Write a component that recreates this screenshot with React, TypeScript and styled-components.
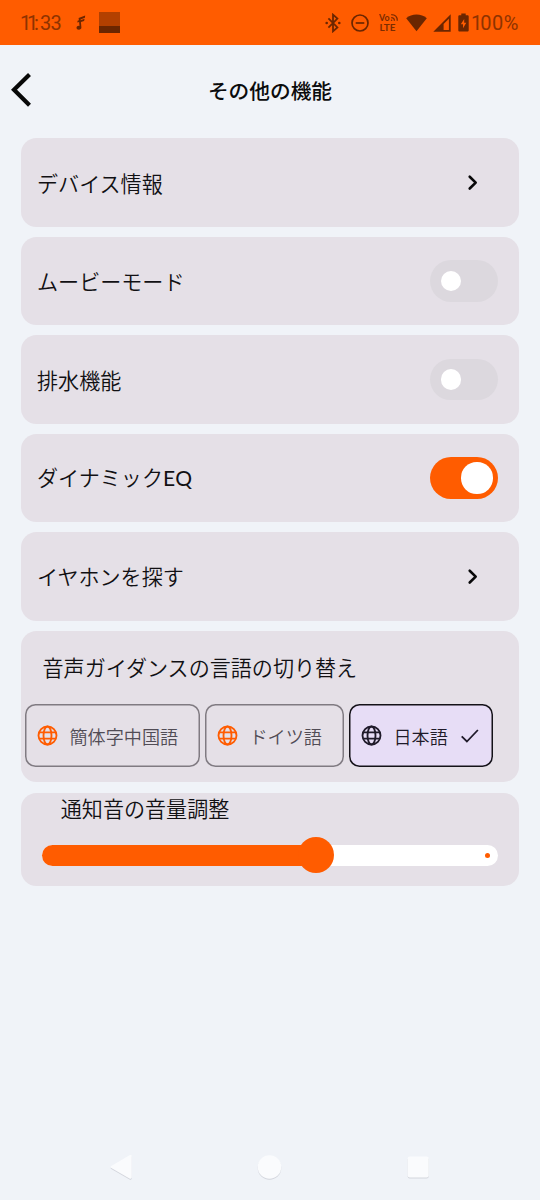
import React from "react";
import styled, { createGlobalStyle } from "styled-components";

const ORANGE = "#ff5c00";
const DARK = "#6b2600";

const GlobalStyle = createGlobalStyle`
  * { box-sizing: border-box; }
  body {
    margin: 0;
    background: #f0f3f8;
    font-family: "Noto Sans CJK JP", "Noto Sans", sans-serif;
    color: #111013;
  }
`;

const Screen = styled.div`
  width: 540px;
  height: 1200px;
  display: flex;
  flex-direction: column;
  overflow: hidden;
`;

const StatusBar = styled.div`
  height: 44.7px;
  flex: none;
  display: flex;
  align-items: center;
  justify-content: space-between;
  padding: 1px 18px 0 20px;
  background: ${ORANGE};
`;

const StatusGroup = styled.div`
  display: flex;
  align-items: center;
  height: 100%;
`;

const StatusText = styled.span`
  font: 400 20px/24px Roboto, sans-serif;
  color: #8e3300;
  white-space: nowrap;
`;

const Clock = styled(StatusText)`
  width: 55.5px;
`;

const Percent = styled(StatusText)`
  width: 51px;
`;

const Tracked = styled.span<{ $spacing: number }>`
  letter-spacing: ${(p) => p.$spacing}px;
`;

const Thumbnail = styled.div`
  width: 21.3px;
  height: 21px;
  margin-left: 13.5px;
  background: linear-gradient(#b34000 0 14px, #6b2600 14px);
`;

const Header = styled.header`
  position: relative;
  flex: none;
  height: 93.8px;
  display: flex;
  align-items: center;
  justify-content: center;
`;

const BackButton = styled.button`
  position: absolute;
  left: 9.5px;
  top: 27px;
  width: 24px;
  height: 36px;
  padding: 0;
  border: 0;
  background: none;
`;

const Title = styled.h1`
  margin: 0;
  padding-bottom: 4px;
  font-size: 20.7px;
  line-height: 30px;
  font-weight: 500;
  color: #0b0b0c;
`;

const List = styled.main`
  flex: 1;
  display: flex;
  flex-direction: column;
  gap: 10.15px;
  padding: 0 21px;
`;

const Card = styled.section<{ $height: number }>`
  height: ${(p) => p.$height}px;
  flex: none;
  border-radius: 15.5px;
  background: #e5e0e7;
`;

const Row = styled(Card)`
  display: flex;
  align-items: center;
  justify-content: space-between;
  padding: 0 20.7px 0 16px;
`;

const Label = styled.span`
  font-size: 21.07px;
  line-height: 30px;
  font-weight: 350;
  white-space: nowrap;
`;

const Chevron = styled.svg`
  width: 11px;
  height: 17px;
  margin-right: 20.6px;
`;

const Toggle = styled.span<{ $on: boolean }>`
  width: 68px;
  height: 41.6px;
  border-radius: 21px;
  display: flex;
  align-items: center;
  justify-content: ${(p) => (p.$on ? "flex-end" : "flex-start")};
  padding: 0 ${(p) => (p.$on ? 5.5 : 10.3)}px;
  background: ${(p) => (p.$on ? ORANGE : "#dcd8de")};
`;

const Knob = styled.span<{ $on: boolean }>`
  flex: none;
  width: ${(p) => (p.$on ? 31.4 : 20.8)}px;
  height: ${(p) => (p.$on ? 31.4 : 20.8)}px;
  border-radius: 50%;
  background: #fff;
`;

const SectionLabel = styled(Label)`
  display: block;
  padding: 21px 0 0 21.5px;
`;

const Chips = styled.div`
  display: flex;
  gap: 5px;
  padding: 22.7px 0 0 4px;
`;

const Chip = styled.button<{ $width: number; $selected?: boolean }>`
  width: ${(p) => p.$width}px;
  height: 62.7px;
  display: flex;
  align-items: center;
  padding: 0 0 0 11.5px;
  border: 0;
  box-shadow: inset 0 0 0 1.5px ${(p) => (p.$selected ? "#141218" : "#807b82")};
  border-radius: 10.5px;
  background: ${(p) => (p.$selected ? "#e7ddf6" : "transparent")};
  color: ${(p) => (p.$selected ? "#1f1a29" : "#514c55")};
  font: 350 18.1px/26px "Noto Sans CJK JP", sans-serif;
  white-space: nowrap;
`;

const ChipText = styled.span`
  margin: 0 12px;
`;

const VolumeLabel = styled(Label)`
  display: block;
  padding: 0 0 0 39.8px;
`;

const SliderTrack = styled.div`
  position: relative;
  width: 456px;
  height: 21px;
  margin: 22.3px 0 0 21px;
  border-radius: 10.5px;
  background: #fff;
`;

const SliderFill = styled.div`
  width: 274px;
  height: 100%;
  border-radius: 10.5px 0 0 10.5px;
  background: ${ORANGE};
`;

const SliderThumb = styled.div`
  position: absolute;
  left: 255.7px;
  top: -8.2px;
  width: 36.4px;
  height: 36.4px;
  border-radius: 50%;
  background: ${ORANGE};
`;

const SliderStop = styled.div`
  position: absolute;
  right: 7.8px;
  top: 7.9px;
  width: 5.2px;
  height: 5.2px;
  border-radius: 50%;
  background: ${ORANGE};
`;

const NavBar = styled.nav`
  height: 66px;
  flex: none;
  display: flex;
  justify-content: space-between;
  align-items: center;
  padding: 0 108.7px 0 108.5px;
`;

const NavIcon = styled.svg`
  filter: drop-shadow(0 1px 0.6px rgba(60, 60, 80, 0.16));
`;

const MusicIcon = () => (
  <svg width="10" height="16" viewBox="0 0 10 16" fill={DARK}>
    <path d="M2.6 3.1 9.2.4 8.9 2.7 4.6 4.4v.8l4-1.5-.5 2.4-3.2 1 .5 5.4c0 1.3-1.1 2.2-2.5 2.2S.5 14 .5 12.8s1-2 2.4-2l.6.1-.4-4-1.8.6.3-1.8 1.3-.5z" />
  </svg>
);

const BluetoothIcon = () => (
  <svg width="16" height="20" viewBox="0 0 16 20" fill="none" stroke={DARK} strokeWidth="1.8">
    <path d="m3.4 5.3 9 9.1L8 18.3V1.7l4.4 3.9-9 9.1" />
    <circle cx="1.7" cy="10" r="1.3" fill={DARK} stroke="none" />
    <circle cx="14.3" cy="10" r="1.3" fill={DARK} stroke="none" />
  </svg>
);

const DndIcon = () => (
  <svg width="18" height="18" viewBox="0 0 18 18" fill="none" stroke={DARK} strokeWidth="1.7">
    <circle cx="9" cy="9" r="8" />
    <path d="M4.7 9h8.6" />
  </svg>
);

const VoIcon = () => (
  <svg width="20" height="19" viewBox="0 0 20 19">
    <g fill="#7b2c00" fontFamily="Lato, sans-serif" fontWeight="700">
      <text x="0" y="7.6" fontSize="9.6" textLength="10.5" lengthAdjust="spacingAndGlyphs">Vo</text>
      <text x="0.4" y="17.8" fontSize="9.8" textLength="16" lengthAdjust="spacingAndGlyphs">LTE</text>
    </g>
    <path d="M12.2 1.7c3.7 0 6.1 2.3 6.1 6M12.2 4.6c2 0 3.2 1.2 3.2 3.1" fill="none" stroke="#7b2c00" strokeWidth="1.3" />
    <circle cx="12.6" cy="7.2" r="0.8" fill="#7b2c00" />
  </svg>
);

const WifiIcon = () => (
  <svg width="21" height="18" viewBox="0 0 21 18" fill={DARK}>
    <path d="M10.5 17.3.2 4.2C3 1.7 6.6.5 10.5.5S18 1.7 20.8 4.2z" />
  </svg>
);

const SignalIcon = () => (
  <svg width="18" height="18" viewBox="0 0 18 18">
    <path fillRule="evenodd" fill={DARK} d="M17.7.3v17.4H.3zM15.9 4.7 10.6 10v5.9h5.3z" />
  </svg>
);

const BatteryIcon = () => (
  <svg width="11" height="19" viewBox="0 0 11 19">
    <path fill={DARK} d="M3.3.4h4.4v1.8h1.7c.8 0 1.3.5 1.3 1.3v13.7c0 .8-.5 1.3-1.3 1.3H1.6c-.8 0-1.3-.5-1.3-1.3V3.5c0-.8.5-1.3 1.3-1.3h1.7z" />
    <path fill={ORANGE} d="M6.2 6 2.8 11.3h2.2v3.9l3.3-5.4H6.2z" />
  </svg>
);

const GlobeIcon = ({ color }: { color: string }) => (
  <svg width="21" height="21" viewBox="0 0 21 21" fill="none" stroke={color} strokeWidth="1.85">
    <circle cx="10.5" cy="10.5" r="9" />
    <ellipse cx="10.5" cy="10.5" rx="4" ry="9" />
    <path d="M2.3 7.4h16.4M2.3 13.6h16.4" />
  </svg>
);

const CheckIcon = () => (
  <svg width="20" height="16" viewBox="0 0 20 16" fill="none" stroke="#1f1a29" strokeWidth="1.8">
    <path d="m1.7 8.3 5.2 5.2L17.9 2" />
  </svg>
);

const ArrowRight = () => (
  <Chevron viewBox="0 0 11 17" fill="none" stroke="#09090a" strokeWidth="2.6" strokeLinecap="round" strokeLinejoin="round">
    <path d="m2.7 2.7 6 5.9-6 5.9" />
  </Chevron>
);

const Switch = ({ on }: { on: boolean }) => (
  <Toggle role="switch" aria-checked={on} $on={on}>
    <Knob $on={on} />
  </Toggle>
);

const rows: { label: string; on?: boolean }[] = [
  { label: "デバイス情報" },
  { label: "ムービーモード", on: false },
  { label: "排水機能", on: false },
  { label: "ダイナミックEQ", on: true },
  { label: "イヤホンを探す" },
];

const languages = [
  { label: "簡体字中国語", width: 175 },
  { label: "ドイツ語", width: 139 },
  { label: "日本語", width: 144, selected: true },
];

const StatusIcons = styled.div`
  display: flex;
  align-items: center;
  margin-right: 2px;
  & > :nth-child(2) { margin-left: 9.7px; }
  & > :nth-child(3) { margin-left: 10.5px; }
  & > :nth-child(4) { margin-left: 6.5px; }
  & > :nth-child(5) { margin-left: 6px; }
  & > :nth-child(6) { margin-left: 7.5px; }
`;

const EqLatin = styled.span`
  font-family: Lato, sans-serif;
  font-weight: 400;
  font-size: 21px;
  letter-spacing: 0.4px;
`;

export default function App() {
  return (
    <Screen>
      <GlobalStyle />
      <StatusBar>
        <StatusGroup>
          <Clock>
            <Tracked $spacing={-4.2}>11</Tracked>
            <Tracked $spacing={1}>:</Tracked>
            <Tracked $spacing={-0.7}>33</Tracked>
          </Clock>
          <MusicIcon />
          <Thumbnail />
        </StatusGroup>
        <StatusGroup>
          <StatusIcons>
            <BluetoothIcon />
            <DndIcon />
            <VoIcon />
            <WifiIcon />
            <SignalIcon />
            <BatteryIcon />
          </StatusIcons>
          <Percent>
            <Tracked $spacing={-1.9}>1</Tracked>
            <Tracked $spacing={0.5}>00</Tracked>%
          </Percent>
        </StatusGroup>
      </StatusBar>
      <Header>
        <BackButton aria-label="戻る">
          <svg width="24" height="36" viewBox="0 0 24 36" fill="none" stroke="#080808" strokeWidth="4.2">
            <path d="M19.5 2.5 4 17.8 19.5 33.2" />
          </svg>
        </BackButton>
        <Title>その他の機能</Title>
      </Header>
      <List>
        {rows.map((row) => (
          <Row key={row.label} $height={88.3}>
            <Label>
              {row.label.replace("EQ", "")}
              {row.label.endsWith("EQ") && <EqLatin>EQ</EqLatin>}
            </Label>
            {row.on === undefined ? <ArrowRight /> : <Switch on={row.on} />}
          </Row>
        ))}
        <Card $height={151.7}>
          <SectionLabel>音声ガイダンスの言語の切り替え</SectionLabel>
          <Chips>
            {languages.map((l) => (
              <Chip key={l.label} $width={l.width} $selected={l.selected}>
                <GlobeIcon color={l.selected ? "#1f1a29" : ORANGE} />
                <ChipText>{l.label}</ChipText>
                {l.selected && <CheckIcon />}
              </Chip>
            ))}
          </Chips>
        </Card>
        <Card $height={93.7}>
          <VolumeLabel>通知音の音量調整</VolumeLabel>
          <SliderTrack>
            <SliderFill />
            <SliderThumb />
            <SliderStop />
          </SliderTrack>
        </Card>
      </List>
      <NavBar>
        <NavIcon width="24" height="26" viewBox="0 0 24 26" fill="#fafbfd">
          <path d="M2.3 12 20.5 1.3c1-.6 2.3-.2 2.3 1.2v20.7c0 1.4-1.3 1.8-2.3 1.2L2.3 14c-.9-.6-.9-1.5 0-2z" />
        </NavIcon>
        <NavIcon width="26" height="26" viewBox="0 0 26 26" fill="#fafbfd">
          <circle cx="13.5" cy="13" r="11.8" />
        </NavIcon>
        <NavIcon width="26" height="26" viewBox="0 0 26 26" fill="#fafbfd">
          <rect x="2.7" y="2.5" width="21" height="21" rx="2" />
        </NavIcon>
      </NavBar>
    </Screen>
  );
}
